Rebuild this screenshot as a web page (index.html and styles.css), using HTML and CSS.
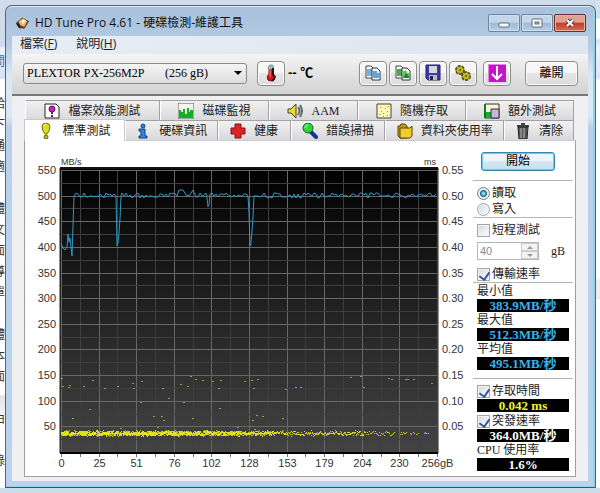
FILE: index.html
```html
<!DOCTYPE html>
<html lang="zh-Hant">
  <head>
    <meta charset="utf-8" />
    <meta name="viewport" content="width=device-width, initial-scale=1.0" />
    <title>HD Tune Pro 4.61 - 硬碟檢測-維護工具</title>
    <link rel="stylesheet" href="styles.css">
  </head>
  <body>
    <div class="behind behind-left" aria-hidden="true">
      <span></span><span></span><span class="blue">問</span><span></span><span>給</span><span>下</span><span>通</span><span>適</span>
      <span></span><span>體</span><span>文</span><span>面</span><span>導</span><span>單</span>
      <span></span><span>體</span><span>本</span><span>面</span><span></span><span>由</span><span></span><span>錄</span>
    </div>

    <main class="window">
      <header class="titlebar">
        <svg class="app-icon" viewBox="0 0 16 14"><path d="M1 7 8 1l7 4-5 8-6-1z" fill="#5b4330"/><path d="m4 5 5-3 4 3-3 6-5-2z" fill="#f0b766"/><path d="m6 5 3-2 2 2-2 3z" fill="#fff1d8"/><path d="m1 7 3 5 2 1-1-5z" fill="#222"/></svg>
        <h1>HD Tune Pro 4.61 - 硬碟檢測-維護工具</h1>
        <div class="window-buttons">
          <button aria-label="最小化"><svg viewBox="0 0 12 10"><rect x="1" y="5" width="10" height="4" rx="1" fill="#fff" stroke="#5c6b7d"/></svg></button>
          <button aria-label="最大化"><svg viewBox="0 0 12 10"><rect x="1" y="1" width="10" height="8" rx="1" fill="#fff" stroke="#5c6b7d"/><rect x="4" y="4" width="4" height="2" fill="#a9bdd3" stroke="#5c6b7d"/></svg></button>
          <button class="close" aria-label="關閉"><svg viewBox="0 0 12 10"><path d="m3 2 6 6m0-6L3 8" stroke="#6b3a3a" stroke-width="4"/><path d="m3 2 6 6m0-6L3 8" stroke="#fff" stroke-width="2"/></svg></button>
        </div>
      </header>

      <nav class="menu">
        <a href="#file">檔案(<u>F</u>)</a>
        <a href="#help">說明(<u>H</u>)</a>
      </nav>

      <div class="client">
        <div class="toolbar">
          <div class="drive">
            <select aria-label="硬碟">
              <option>PLEXTOR PX-256M2P &nbsp; &nbsp; &nbsp; (256 gB)</option>
            </select>
            <svg viewBox="0 0 8 4"><path d="M0 0h8L4 4z"/></svg>
          </div>
          <button class="tool" aria-label="溫度"><svg viewBox="0 0 18 18"><path d="M7 2q2-2 4 0v8q3 2 1 6-3 2-6 0-2-4 1-6z" fill="#d8141c" stroke="#701014"/><path d="M7 2q2-2 4 0v3H7z" fill="#75c9cf"/><path d="M8 5v8" stroke="#ff8c88"/><path d="M11 4v7q3 1 1 4l-2 2" fill="none" stroke="#3b0a0c" stroke-width="2"/></svg></button>
          <span class="temp">-- ℃</span>
          <div class="tools">
            <button class="tool" aria-label="複製文字"><svg viewBox="0 0 18 18"><path d="M2 2h5l2 2v10H2z" fill="#fff" stroke="#444"/><path d="M3 5h5v7H3z" fill="#6cb4e8"/><path d="M8 4h5l3 3v9H8z" fill="#fff" stroke="#333"/><path d="M9 7h4v2h2v5H9z" fill="#5aa5e0"/></svg></button>
            <button class="tool" aria-label="複製圖片"><svg viewBox="0 0 18 18"><path d="M2 2h5l2 2v10H2z" fill="#fff" stroke="#444"/><path d="M3 5h5v7H3z" fill="#3fae4c"/><path d="M8 4h5l3 3v9H8z" fill="#fff" stroke="#333"/><path d="M9 7h4v2h2v5H9z" fill="#6fc25a"/><path d="m9 14 3-5 3 3v2z" fill="#158a2a"/></svg></button>
            <button class="tool" aria-label="儲存"><svg viewBox="0 0 18 18"><path d="M2 1h14v15H4l-2-2z" fill="#3c3ca8" stroke="#22225e"/><path d="M5 2h8v7H5z" fill="#d6d6de"/><path d="M5 11h8v5H5z" fill="#b9b9c4"/><path d="M6 12h3v4H6z" fill="#22225e"/></svg></button>
            <button class="tool" aria-label="選項"><svg viewBox="0 0 18 18"><circle cx="6" cy="6" r="4" fill="#b7ad22" stroke="#5b550c" stroke-width="2" stroke-dasharray="3 1"/><circle cx="12" cy="12" r="4" fill="#c6bb2a" stroke="#5b550c" stroke-width="2" stroke-dasharray="3 1"/><circle cx="6" cy="6" r="3" fill="#c3b92e"/><circle cx="12" cy="12" r="3" fill="#c3b92e"/><circle cx="6" cy="6" r="1" fill="#544e0b"/><circle cx="12" cy="12" r="1" fill="#544e0b"/></svg></button>
            <button class="tool download" aria-label="下載"><svg viewBox="0 0 18 18"><path d="M0 0h18v18H0z" fill="#c414c4"/><path d="M0 0h18v1H1v17H0z" fill="#e684e6"/><path d="M9 2v12M4 10l5 5 5-5" fill="none" stroke="#fff" stroke-width="2"/></svg></button>
            <button class="tool exit">離開</button>
          </div>
        </div>

        <div class="tabs tabs-back">
          <button><svg viewBox="0 0 16 16"><path d="M1 1h11l3 3v11H1z" fill="#fff" stroke="#222"/><circle cx="8" cy="6" r="3" fill="#c61fc4" stroke="#651064"/><path d="M7 9h2v2H7zM7 12h2v2H7z" fill="#651064"/></svg>檔案效能測試</button>
          <button><svg viewBox="0 0 16 16"><path d="M0 0h16v16H0z" fill="#f3f7ee" stroke="#555"/><path d="M1 15V7h2v2h2V6h2v5h2V5h2v4h1V7h3v8z" fill="#17ad2b"/></svg>磁碟監視</button>
          <button><svg viewBox="0 0 16 16"><path d="M1 6h3l5-5v14l-5-5H1z" fill="#e6de34" stroke="#4f4a10"/><path d="M11 4q3 4 0 8M13 2q4 6 0 12" fill="none" stroke="#666" stroke-width="2"/></svg>AAM</button>
          <button><svg viewBox="0 0 16 16"><path d="M1 1h14v14H1z" fill="#fbf7b4" stroke="#444"/><path d="M3 11h1v1H3zM5 8h1v1H5zM7 10h1v1H7zM9 5h1v1H9zM11 8h1v1h-1zM12 3h1v1h-1zM4 4h1v1H4zM11 12h1v1h-1zM7 13h1v1H7z" fill="#b59c00"/></svg>隨機存取</button>
          <button><svg viewBox="0 0 16 16"><path d="M1 1h14v14H1z" fill="#f6f6dc" stroke="#333"/><path d="M1 9h6v6H1z" fill="#1cae2e"/><path d="M1 15V1" stroke="#127a1e" stroke-width="2"/><path d="M7 6h8v9H7z" fill="#c9b4e0" stroke="#333"/></svg>額外測試</button>
        </div>
        <div class="tabs tabs-front">
          <button class="active"><svg viewBox="0 0 16 16"><path d="M8 0q4 0 4 4 0 3-3 7H7Q4 7 4 4q0-4 4-4z" fill="#dede1d" stroke="#6b6b12"/><circle cx="8" cy="14" r="2" fill="#b9b918" stroke="#6b6b12"/><path d="M6 3q0-1 2-2" stroke="#fff" fill="none"/></svg>標準測試</button>
          <button><svg viewBox="0 0 16 16"><circle cx="8" cy="3" r="2" fill="#2d87e0" stroke="#123e7a"/><path d="M4 6h6v7h2v2H4v-2h2V8H4z" fill="#2d87e0" stroke="#123e7a"/></svg>硬碟資訊</button>
          <button><svg viewBox="0 0 16 16"><path d="M5 1h6v4h4v6h-4v4H5v-4H1V5h4z" fill="#dd2424" stroke="#7c1212"/></svg>健康</button>
          <button><svg viewBox="0 0 16 16"><path d="m9 9 5 5" stroke="#1f2f9c" stroke-width="4" stroke-linecap="round"/><circle cx="6" cy="5" r="5" fill="#35d13f" stroke="#17641c"/><path d="M3 5q0-2 3-3" stroke="#c8ffc8" fill="none"/></svg>錯誤掃描</button>
          <button><svg viewBox="0 0 16 16"><path d="M1 3h2l1-2h4l2 2v12H3l-2-2z" fill="#c49a10" stroke="#5b4505"/><path d="M3 5h10l2-2v10l-2 2H3z" fill="#f0cd2f" stroke="#5b4505"/></svg>資料夾使用率</button>
          <button><svg viewBox="0 0 16 16"><path d="M6 0h4v2h4v2H2V2h4z" fill="#444"/><path d="M3 4h10l-1 12H4z" fill="#555" stroke="#222"/><path d="M6 5v10M9 5v10" stroke="#bbb"/></svg>清除</button>
        </div>

        <section class="page">
          <svg class="chart" viewBox="0 0 448 334" role="img" aria-label="傳輸速率">
            <defs>
              <linearGradient id="plot-fill" x1="0" y1="0" x2="0" y2="1">
                <stop offset="0" stop-color="#000" />
                <stop offset="1" stop-color="#444" />
              </linearGradient>
            </defs>
            <rect x="35" y="26" width="378" height="286" fill="url(#plot-fill)" />
            <g id="grid"></g>
            <g id="dots" fill="#e6e620"></g>
            <path id="speed" class="speed" />
            <path d="M35 312V27h378v285" fill="none" stroke="#222" />
            <path d="M35 312h378" stroke="#000" stroke-width="2" />
            <g id="labels"></g>
            <text x="36" y="24" class="unit">MB/s</text>
            <text x="411" y="24" class="unit end">ms</text>
          </svg>

          <form class="side">
            <button type="button" class="start">開始</button>
            <fieldset class="group modes">
              <label><input type="radio" name="mode" checked>讀取</label>
              <label><input type="radio" name="mode">寫入</label>
            </fieldset>
            <div class="group options">
              <label><input type="checkbox">短程測試</label>
              <div class="short">
                <span class="spin">
                  <input type="text" id="size" value="40" disabled>
                  <span class="arrows">
                    <button type="button" aria-label="增加" disabled><svg viewBox="0 0 6 3"><path d="M0 3h6L3 0z"/></svg></button>
                    <button type="button" aria-label="減少" disabled><svg viewBox="0 0 6 3"><path d="M0 0h6L3 3z"/></svg></button>
                  </span>
                </span>
                <label for="size">gB</label>
              </div>
              <label><input type="checkbox" checked>傳輸速率</label>
            </div>
            <div class="group results">
              <span>最小值</span>
              <output class="blue">383.9MB/秒</output>
              <span>最大值</span>
              <output class="blue">512.3MB/秒</output>
              <span>平均值</span>
              <output class="blue">495.1MB/秒</output>
            </div>
            <div class="group results last">
              <label><input type="checkbox" checked>存取時間</label>
              <output class="yellow">0.042 ms</output>
              <label><input type="checkbox" checked>突發速率</label>
              <output>364.0MB/秒</output>
              <span>CPU 使用率</span>
              <output>1.6%</output>
            </div>
          </form>
        </section>
      </div>
    </main>

    <div class="behind behind-right"></div>

    <script>
      const left = 36, right = 412, top_y = 29, bottom = 311;
      const step_y = (bottom - top_y) / 11;
      const step_x = (right - left) / 10;
      const names = ["0", "25", "51", "76", "102", "128", "153", "179", "204", "230", "256gB"];

      // fixed seed, so the plot looks the same on every load
      let seed = 17;
      function rnd() {
          seed = (seed * 16807) % 2147483647;
          return seed / 2147483647;
      }

      let grid = "";
      let labels = "";
      for (let i = 0; i <= 20; i++) {
          let x = Math.round(left + i * step_x / 2) + 0.5;
          let color = i % 2 ? "#3e3e3e" : "#686868";
          grid += `<path d="M${x} ${top_y}V${bottom}" stroke="${color}"/>`;
          grid += `<path d="M${x} 313v3" stroke="#777"/>`;
          if (i % 2 == 0) {
              labels += `<text x="${x}" y="326" class="mid">${names[i / 2]}</text>`;
          }
      }
      for (let i = 0; i < 22; i++) {
          let y = Math.round(top_y + i * step_y / 2) + 0.5;
          let color = i % 2 ? "#3e3e3e" : "#686868";
          grid += `<path d="M${left} ${y}H${right}" stroke="${color}"/>`;
          if (i % 2 == 0) {
              let n = 11 - i / 2;
              labels += `<text x="31" y="${y + 3}" class="end">${n * 50}</text>`;
              labels += `<text x="417" y="${y + 3}">${(n * 0.05).toFixed(2)}</text>`;
          }
      }
      document.getElementById("grid").innerHTML = grid;
      document.getElementById("labels").innerHTML = labels;

      // drops and peaks of the transfer rate, the rest stays around 500
      let fixed = {
          36: 88, 38: 93, 40: 95, 42: 92, 43: 79, 44: 87, 45: 83, 47: 101, 48: 70, 49: 41,
          91: 41, 92: 91, 93: 88, 94: 78, 95: 64, 96: 41,
          149: 38, 152: 41, 154: 35, 158: 35, 161: 40, 164: 41, 168: 35, 171: 42,
          182: 43, 183: 52, 184: 50, 186: 39,
          223: 41, 224: 58, 225: 91, 226: 88, 227: 76, 228: 62, 229: 41
      };
      let d = "";
      for (let x = 36; x <= 411; x++) {
          if (fixed[x]) {
              d += `L${x} ${fixed[x] + 0}`;
          } else if (x % 2 && x > 49 && !(x > 149 && x < 171)) {
              d += `L${x} ${Math.round(38 + rnd() * 5)}`;
          }
      }
      d = d.replace("L", "M");
      let speed = document.getElementById("speed");
      speed.setAttribute("d", d);
      speed.setAttribute("transform", "translate(0 14)");

      let dots = "";
      function dot(x, y, o) {
          dots += `<rect x="${x}" y="${y}" width="1" height="1" opacity="${o}"/>`;
      }
      for (let x = 36; x < 404; x++) {
          let count = x < 215 ? 8 : x < 250 ? 5 : x < 340 ? 2 : x < 370 ? 1 : 0;
          for (let k = 0; k < count; k++) {
              dot(x, 289 + Math.round(rnd() * 3 + rnd() * 3), 0.9);
          }
          if (count == 0 && rnd() > 0.6) {
              dot(x, 291 + Math.round(rnd() * 2), 0.9);
          }
      }
      let far = [
          [36, 237], [37, 245], [43, 246], [44, 244], [58, 245], [67, 239], [79, 247], [92, 245], [107, 242],
          [108, 247], [116, 240], [115, 261], [64, 268], [47, 277], [137, 247], [143, 257], [128, 275],
          [136, 275], [138, 279], [155, 243], [162, 245], [165, 235], [170, 238], [177, 239], [187, 240],
          [193, 247], [195, 239], [194, 267], [158, 261], [167, 277], [219, 240], [226, 239], [232, 238],
          [228, 247], [227, 279], [231, 274], [237, 275], [257, 277], [260, 248], [270, 246], [275, 246],
          [325, 236], [335, 235], [338, 246], [363, 237], [366, 238], [380, 238], [382, 238], [388, 238],
          [406, 242], [95, 287], [132, 286], [212, 286], [229, 288], [257, 289]
      ];
      far.forEach(function (p) {
          dots += `<rect x="${p[0]}" y="${p[1]}" width="2" height="1" opacity="0.6"/>`;
      });
      document.getElementById("dots").innerHTML = dots;
    </script>
  </body>
</html>
```
FILE: styles.css
```css
* {
    box-sizing: border-box;
}

body {
    margin: 0;
    display: grid;
    grid-template-columns: 5px 1fr 4px;
    align-items: start;
    background: linear-gradient(#cfdceb 0, #cddae9 24px, #fff 80px);
    font: 12px/16px "Liberation Serif", "Noto Sans CJK TC", sans-serif;
    color: #222;
}

button, input, select {
    margin: 0;
    padding: 0;
    font: inherit;
    color: inherit;
}

.behind {
    min-height: 488px;
    overflow: hidden;
}

.behind-left {
    display: flex;
    flex-direction: column;
    align-items: flex-end;
    padding-top: 10px;
    line-height: 21px;
    background: linear-gradient(#cfdceb 0, #cfdceb 46px, #eaf2fb 48px, #d5e1f3 78px, #fff 80px, #fff 394px, #e4e4e8 396px, #f5f5f7 416px, #fff 417px);
}

.behind-left span {
    height: 21px;
    flex: none;
    color: #333;
}

.behind-left .blue {
    color: #4a68a0;
}

.behind-right {
    background: linear-gradient(#d5e1ee 0, #cfdceb 18px, #fff 19px, #fff 38px, #d5e3f0 40px, #eef0fa 48px, #dfe3f5 78px, #fff 80px, #fff 278px, #f3e8ee 280px, #f3e8ee 299px, #fff 300px);
}

.window {
    margin-top: 5px;
    padding: 0 7px 6px 6px;
    border: 1px solid #536274;
    border-bottom-color: #3c5961;
    border-radius: 7px 7px 0 0;
    background: linear-gradient(#a8c0da 0, #b5cbe4 40px, #dbe7f5 70px, #dbe7f5 110px, #b9d0ea 122px, #b9d3ec 100%);
    box-shadow: inset 0 1px #e2edf7, inset -2px -1px #8cd5e8;
}

.titlebar {
    display: flex;
    align-items: center;
    height: 30px;
    padding: 4px 2px 0 3px;
}

.app-icon {
    width: 15px;
    height: 14px;
    margin-right: 5px;
}

h1 {
    flex: 1;
    margin: 0;
    font: 12px/16px "Open Sans", "Noto Sans CJK TC", sans-serif;
    color: #111;
    white-space: nowrap;
}

.window-buttons {
    display: flex;
    gap: 1px;
}

.window-buttons button {
    display: flex;
    align-items: center;
    justify-content: center;
    width: 32px;
    height: 18px;
    border: 1px solid #6d839e;
    border-radius: 2px;
    background: linear-gradient(#c5d6e9 45%, #9fb9d6 50%, #b8cfe6);
    box-shadow: inset 0 0 0 1px #d3e1ef;
}

.window-buttons .close {
    border-color: #6b2d2d;
    background: linear-gradient(#e0a092 45%, #c23d28 50%, #d66f53);
    box-shadow: inset 0 0 0 1px #e6b0a4;
}

.window-buttons svg {
    width: 12px;
    height: 10px;
}

.menu {
    display: flex;
    gap: 19px;
    height: 18px;
    padding-left: 8px;
    background: linear-gradient(90deg, #e6edf5, #dce5f0);
    font-family: "Open Sans", "Noto Sans CJK TC", sans-serif;
}

.menu a {
    color: #222;
    text-decoration: none;
}

.client {
    padding-bottom: 4px;
    background: #f0f0f2;
}

.toolbar {
    display: flex;
    align-items: center;
    height: 42px;
    padding: 0 10px 2px 11px;
    border-bottom: 2px solid #777;
    background: linear-gradient(#f4f4f4, #d2d2d2);
}

.drive {
    display: grid;
    flex: 0 1 224px;
    align-items: center;
}

.drive select, .drive svg {
    grid-area: 1 / 1;
}

.drive select {
    appearance: none;
    width: 100%;
    height: 21px;
    padding-left: 3px;
    border: 1px solid #8a8a8a;
    border-radius: 3px;
    background: linear-gradient(#f4f4f4, #dedede);
    color: #000;
}

.drive svg {
    justify-self: end;
    width: 8px;
    height: 4px;
    margin-right: 5px;
    pointer-events: none;
}

.tool {
    display: flex;
    align-items: center;
    justify-content: center;
    width: 28px;
    height: 25px;
    border: 1px solid #8e8e8e;
    border-radius: 4px;
    background: linear-gradient(#f6f6f6 45%, #e6e6e6 50%, #dcdcdc);
    box-shadow: inset 0 0 0 1px #fafafa;
}

.tool svg {
    width: 18px;
    height: 18px;
}

.drive + .tool {
    margin-left: 10px;
}

.temp {
    margin-left: 3px;
    font: bold 13px/16px "Liberation Sans", "Noto Sans CJK TC", sans-serif;
    color: #000;
}

.tools {
    display: flex;
    gap: 2px;
    margin-left: auto;
}

.tools .download {
    margin-left: 4px;
}

.tools .exit {
    width: 53px;
    margin-left: 12px;
    color: #000;
}

.tabs {
    display: grid;
    margin: 0 14px 0 13px;
}

.tabs-back {
    grid-template-columns: 135fr 109fr 89fr 108fr 108fr;
    margin-top: 4px;
}

.tabs-front {
    grid-template-columns: 100fr 93fr 73fr 95fr 119fr 70fr;
}

.tabs button {
    display: flex;
    align-items: center;
    justify-content: center;
    gap: 8px;
    height: 20px;
    border: 1px solid #a2a2a6;
    border-left-color: #fff;
    border-bottom: 0;
    background: linear-gradient(#f1f1f1, #d9d9dc);
    white-space: nowrap;
}

.tabs svg {
    width: 16px;
    height: 16px;
}

.tabs .active {
    margin: -1px 0 -1px -1px;
    height: 22px;
    border-color: #c9c9cc;
    background: #fff;
}

.page {
    display: flex;
    margin: 0 12px;
    border: 1px solid #a0a0a4;
    border-top-color: #ccc;
    background: #fff;
}

.chart {
    display: block;
    flex: 1;
    min-width: 0;
    align-self: flex-start;
    font: 11px "Liberation Sans", sans-serif;
    fill: #333;
}

.chart .unit {
    font-size: 9px;
}

.chart .mid {
    text-anchor: middle;
}

.chart .end {
    text-anchor: end;
}

.chart .speed {
    fill: none;
    stroke: #2f98c4;
}

.side {
    flex: none;
    width: 102px;
    padding: 11px 2px 5px 0;
}

.start {
    display: block;
    width: 74px;
    height: 19px;
    margin: 0 0 9px 8px;
    border: 1px solid #3a87ab;
    border-radius: 3px;
    background: linear-gradient(#eef6fb 45%, #d5e8f3 50%, #c5dfee);
    box-shadow: inset 0 0 0 1px #5fd0ee;
    line-height: 15px;
    color: #000;
}

.group {
    display: flex;
    flex-direction: column;
    margin: 0;
    padding: 0 0 0 4px;
    border: 0;
    border-top: 1px solid #b5b5b8;
}

.group label {
    display: flex;
    align-items: center;
    gap: 2px;
    height: 16px;
    white-space: nowrap;
}

.modes {
    padding-top: 4px;
}

.options {
    padding-top: 4px;
}

.group input[type="radio"], .group input[type="checkbox"] {
    appearance: none;
    width: 13px;
    height: 13px;
    border: 1px solid #a2a6aa;
    background: linear-gradient(135deg, #d3d6da, #fff);
    box-shadow: inset 0 0 0 1px #f2f2f2;
}

.group input[type="radio"] {
    border-radius: 50%;
}

.group input[type="radio"]:checked {
    border-color: #6c7f8c;
    background: radial-gradient(circle, #8fd5ee 1px, #1e678c 3px, #e2eef3 4px);
}

.group input[type="checkbox"]:checked::before {
    content: "";
    display: block;
    width: 5px;
    height: 8px;
    margin: 1px 3px;
    border: solid #39549c;
    border-width: 0 2px 2px 0;
    transform: rotate(35deg);
}

.short {
    display: flex;
    align-items: center;
    gap: 12px;
    margin: 4px 0 6px;
}

.spin {
    display: flex;
    width: 62px;
    height: 18px;
    border: 1px solid #b5b8bb;
}

.spin input {
    flex: 1;
    min-width: 0;
    padding-left: 2px;
    border: 0;
    background: #fff;
    font: 11px "Liberation Sans", sans-serif;
    color: #888;
}

.arrows {
    display: flex;
    flex-direction: column;
    width: 17px;
}

.arrows button {
    display: flex;
    flex: 1;
    align-items: center;
    justify-content: center;
    border: 1px solid #ccc;
    background: #f3f3f3;
}

.arrows svg {
    width: 6px;
    height: 3px;
    fill: #999;
}

.results > span {
    height: 16px;
    white-space: nowrap;
}

.results output {
    height: 13px;
    width: 92px;
    background: #000;
    color: #fff;
    font-weight: bold;
    font-size: 13px;
    line-height: 13px;
    text-align: center;
    overflow: hidden;
}

.results .blue {
    color: #35b4f0;
}

.results .yellow {
    color: #f4f42c;
}

.last {
    margin-top: 8px;
    padding-top: 3px;
}

.last label {
    margin-top: 1px;
}
```
